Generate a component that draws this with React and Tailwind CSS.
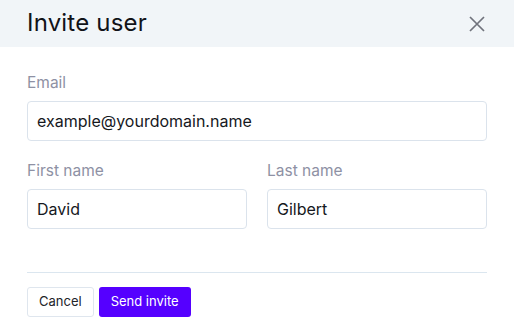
export default function App() {
  return (
    <div className="w-[514px] h-[328px] bg-white overflow-hidden" style={{ fontFamily: "Inter, 'Noto Sans', sans-serif" }}>
      <div className="h-[47px] bg-[#f1f5f8] flex items-center justify-between pl-[27px] pr-[28px]">
        <h1 className="text-[24px] leading-none text-[#111318] tracking-[0.2px] -mt-[2px]">Invite user</h1>
        <svg width="18" height="18" viewBox="0 0 18 18" className="text-[#70737c]">
          <path d="M2 2 L16 16 M16 2 L2 16" stroke="currentColor" strokeWidth="1.7" fill="none" />
        </svg>
      </div>
      <div className="px-[27px] pt-[26px]">
        <label className="block text-[15.5px] leading-[20px] text-[#8e91a4]">Email</label>
        <div className="mt-[8px] h-[40px] border border-[#dbe3ec] rounded-[4px] flex items-center px-[9px] text-[16px] text-[#16181d]">
          example@yourdomain.name
        </div>
        <div className="mt-[20px] grid grid-cols-2 gap-[20px]">
          <div>
            <label className="block text-[15.5px] leading-[20px] text-[#8e91a4]">First name</label>
            <div className="mt-[8px] h-[40px] border border-[#dbe3ec] rounded-[4px] flex items-center px-[9px] text-[16px] text-[#16181d]">
              David
            </div>
          </div>
          <div>
            <label className="block text-[15.5px] leading-[20px] text-[#8e91a4]">Last name</label>
            <div className="mt-[8px] h-[40px] border border-[#dbe3ec] rounded-[4px] flex items-center px-[9px] text-[16px] text-[#16181d]">
              Gilbert
            </div>
          </div>
        </div>
        <div className="mt-[43px] h-px bg-[#dbe6ef]" />
        <div className="mt-[14px] flex gap-[5px]">
          <button className="h-[30px] px-[11px] border border-[#dfe6ee] rounded-[3px] bg-white text-[13px] text-[#222429]">Cancel</button>
          <button className="h-[30px] px-[12px] rounded-[3px] bg-[#5500ff] text-[13px] text-white">Send invite</button>
        </div>
      </div>
    </div>
  );
}
